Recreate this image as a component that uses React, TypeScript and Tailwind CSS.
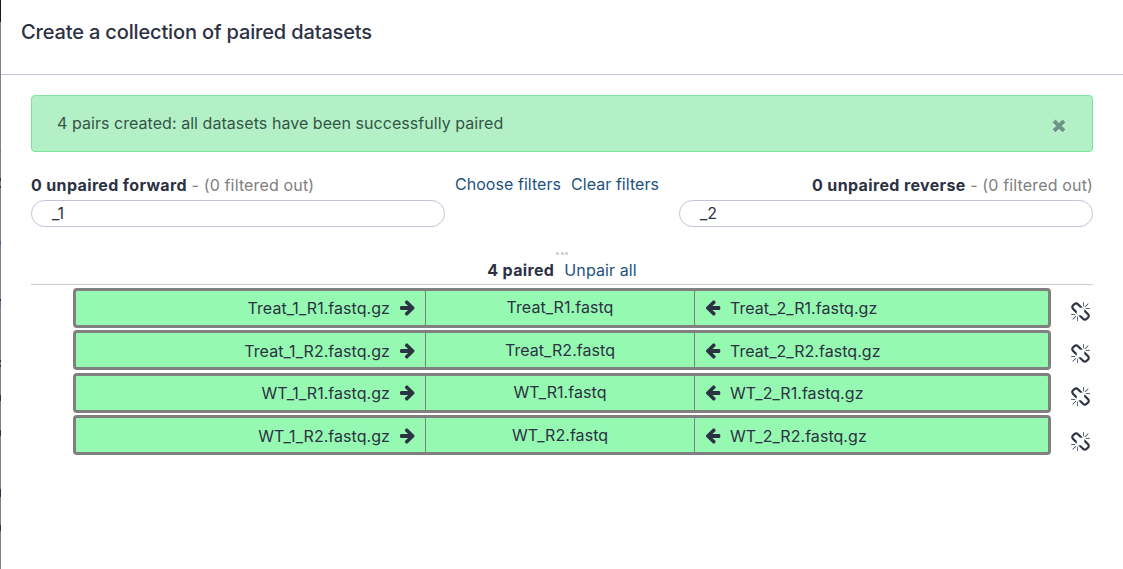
import React from "react";

type Pair = { forward: string; name: string; reverse: string; gap: string; shift: string; unlink: string };

const pairs: Pair[] = [
  { forward: "Treat_1_R1.fastq.gz", name: "Treat_R1.fastq", reverse: "Treat_2_R1.fastq.gz", gap: "", shift: "", unlink: "pt-[14px]" },
  { forward: "Treat_1_R2.fastq.gz", name: "Treat_R2.fastq", reverse: "Treat_2_R2.fastq.gz", gap: "mt-[2px]", shift: "pt-[2px]", unlink: "pt-[14px]" },
  { forward: "WT_1_R1.fastq.gz", name: "WT_R1.fastq", reverse: "WT_2_R1.fastq.gz", gap: "mt-[3px]", shift: "", unlink: "pt-[14px]" },
  { forward: "WT_1_R2.fastq.gz", name: "WT_R2.fastq", reverse: "WT_2_R2.fastq.gz", gap: "mt-[2px]", shift: "pt-[2px]", unlink: "pt-[17px]" },
];

function Arrow({ className }: { className: string }) {
  return (
    <svg viewBox="128 160 1472 1600" fill="currentColor" className={`h-[16px] w-[14.5px] shrink-0 ${className}`}>
      <path d="M1600 960q0 54-37 91l-651 651q-39 37-91 37-51 0-90-37l-75-75q-38-38-38-91t38-91l293-293h-704q-52 0-84.5-37.5t-32.5-90.5v-128q0-53 32.5-90.5t84.5-37.5h704l-293-294q-38-36-38-90t38-90l75-75q38-38 90-38 53 0 91 38l651 651q37 35 37 90z" />
    </svg>
  );
}

function BrokenChain() {
  return (
    <svg viewBox="0 0 1664 1664" fill="currentColor" className="size-[19px]">
      <path d="M439 1271l-256 256q-11 9-23 9t-23-9q-9-10-9-23t9-23l256-256q10-9 23-9t23 9q9 10 9 23t-9 23zm169 41v320q0 14-9 23t-23 9-23-9-9-23v-320q0-14 9-23t23-9 23 9 9 23zm-224-224q0 14-9 23t-23 9h-320q-14 0-23-9t-9-23 9-23 23-9h320q14 0 23 9t9 23zm1264 128q0 120-85 203l-147 146q-83 83-203 83-121 0-204-85l-334-335q-21-21-42-56l239-18 273 274q27 27 68 27.5t68-26.5l147-146q28-28 28-67 0-40-28-68l-274-275 18-239q35 21 56 42l336 336q84 86 84 204zm-617-724l-239 18-273-274q-28-28-68-28-39 0-68 27l-147 146q-28 28-28 67 0 40 28 68l274 274-18 240q-35-21-56-42l-336-336q-84-86-84-204 0-120 85-203l147-146q83-83 203-83 121 0 204 85l334 335q21 21 42 56zm633 84q0 14-9 23t-23 9h-320q-14 0-23-9t-9-23 9-23 23-9h320q14 0 23 9t9 23zm-544-544v320q0 14-9 23t-23 9-23-9-9-23v-320q0-14 9-23t23-9 23 9 9 23zm407 151l-256 256q-11 9-23 9t-23-9q-9-10-9-23t9-23l256-256q10-9 23-9t23 9q9 10 9 23t-9 23z" />
    </svg>
  );
}

function PairRow({ pair }: { pair: Pair }) {
  return (
    <li className={`flex h-10 ${pair.gap}`}>
      <div className="ml-[42px] flex h-10 w-[978px] rounded-[4px] border-[3px] border-[#808080] bg-[#95f9b1] leading-[32px]">
        <span className={`flex w-[350px] items-center justify-end border-r border-[#808080] pr-[10.5px] ${pair.shift}`}>
          <span>{pair.forward}</span>
          <Arrow className="ml-[10px]" />
        </span>
        <span className={`w-[269px] border-r border-[#808080] text-center ${pair.shift ? "pt-px" : ""}`}>{pair.name}</span>
        <span className={`flex flex-1 items-center pl-[10.5px] ${pair.shift}`}>
          <Arrow className="mr-[10px] rotate-180" />
          <span>{pair.reverse}</span>
        </span>
      </div>
      <button className={`ml-[20px] flex items-start ${pair.unlink}`} aria-label="Unpair">
        <BrokenChain />
      </button>
    </li>
  );
}

function UnpairedTitle({ side, align }: { side: string; align: string }) {
  return (
    <div className={align}>
      <strong className="font-bold tracking-[0.36px]">0 unpaired {side}</strong>{" "}
      <span className="tracking-[0.15px] text-[#808080]">- (0 filtered out)</span>
    </div>
  );
}

export default function App() {
  return (
    <div className="flex h-[569px] w-[1123px] overflow-hidden bg-white font-['Inter','Liberation_Sans',sans-serif] text-[16px] leading-6 tracking-[0.05px] text-[#2c3143]">
      <div className="flex w-px flex-col bg-[#80808f]">
        <div className="h-[22px] bg-[#161827]" />
        <div className="mt-[128px] h-[2px] bg-[#8a665c]" />
        <div className="mt-[26px] h-[3px] bg-[#2c3143]" />
        <div className="mt-[5px] h-[2px] bg-[#2c3143]" />
        <div className="mt-[53px] h-[4px] bg-[#45668f]" />
        <div className="mt-[54px] h-[2px] bg-[#2c3143]" />
        <div className="h-[6px] bg-[#5a789c]" />
        <div className="mt-[53px] h-[2px] bg-[#2c3143]" />
        <div className="mt-[3px] h-[2px] bg-[#2c3143]" />
        <div className="mt-[28px] h-[6px] bg-[#2c3143]" />
        <div className="mt-[29px] h-[6px] bg-[#2c3143]" />
        <div className="mt-[53px] h-[8px] bg-[#2c3143]" />
        <div className="mt-[28px] h-[6px] bg-[#2c3143]" />
      </div>
      <div className="flex-1">
        <header className="h-[75px] border-b border-[#c4c2d8] pl-5 pt-[17px]">
          <h1 className="text-[20px] font-medium leading-[30px] tracking-[-0.15px]">Create a collection of paired datasets</h1>
        </header>
        <main className="ml-[30px] w-[1062px] pt-5">
          <div className="flex h-[57px] items-center justify-between rounded-[4px] border border-[#7de39a] bg-[#b4f0c5] pl-[25px] pr-[26px] text-[#335548]">
            <span className="-mt-[2px]">4 pairs created: all datasets have been successfully paired</span>
            <svg viewBox="0 0 14 14" className="mt-[4px] size-[14px] drop-shadow-[0_1px_0_#ffffffaa]" stroke="#6d9486" strokeWidth="4">
              <path d="M2 2 12 12M12 2 2 12" />
            </svg>
          </div>
          <div className="mt-[21px] grid h-6 grid-cols-[414px_1fr_414px]">
            <UnpairedTitle side="forward" align="text-left" />
            <div className="flex -translate-y-px justify-center gap-[10px] pr-[10px] text-[#21527e]">
              <a>Choose filters</a>
              <a>Clear filters</a>
            </div>
            <UnpairedTitle side="reverse" align="text-right" />
          </div>
          <div className="mt-[3px] flex justify-between">
            <div className="h-[27px] w-[414px] rounded-full border border-[#c4c2d8] pl-5 leading-[25px]">_1</div>
            <div className="h-[27px] w-[414px] rounded-full border border-[#c4c2d8] pl-5 leading-[25px]">_2</div>
          </div>
          <div className="mt-[24px] flex h-[4px] items-center justify-center gap-[1.5px]">
            <i className="size-[3px] rounded-full bg-[#cccccc]" />
            <i className="size-[3px] rounded-full bg-[#cccccc]" />
            <i className="size-[3px] rounded-full bg-[#cccccc]" />
          </div>
          <div className="flex h-[30px] justify-center gap-[10px] border-b border-[#cccccc] pt-[3px]">
            <strong className="font-bold tracking-[0.36px]">4 paired</strong>
            <a className="tracking-[0.1px] text-[#21527e]">Unpair all</a>
          </div>
          <ul className="mt-[3px]">
            {pairs.map((pair) => <PairRow key={pair.name} pair={pair} />)}
          </ul>
        </main>
      </div>
    </div>
  );
}
